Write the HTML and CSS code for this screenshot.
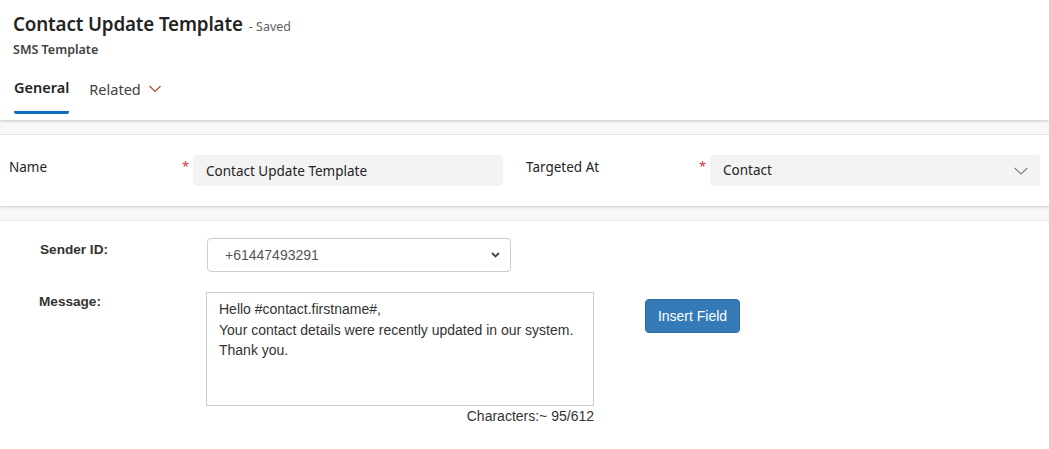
FILE: index.html
```html
<!DOCTYPE html>
<html>
<head>
<meta charset="utf-8">
<link rel="stylesheet" href="styles.css">
</head>
<body>
<header class="header">
  <div class="title-row">
    <h1 class="title">Contact Update Template</h1>
    <span class="saved">- Saved</span>
  </div>
  <div class="entity">SMS Template</div>
  <nav class="tabs">
    <div class="tab active">General</div>
    <div class="tab">Related
      <svg class="chev" width="12" height="8" viewBox="0 0 12 8"><path d="M0.5 1 L6 6.5 L11.5 1" fill="none" stroke="#b0502e" stroke-width="1.2"/></svg>
    </div>
  </nav>
</header>
<div class="gap"></div>
<section class="card">
  <div class="field">
    <label class="flabel">Name</label>
    <span class="req">*</span>
    <div class="finput">Contact Update Template</div>
  </div>
  <div class="field second">
    <label class="flabel">Targeted At</label>
    <span class="req">*</span>
    <div class="finput select">Contact
      <svg class="schev" width="14" height="8" viewBox="0 0 14 8"><path d="M0.5 0.8 L7 7 L13.5 0.8" fill="none" stroke="#777" stroke-width="1.1"/></svg>
    </div>
  </div>
</section>
<div class="gap"></div>
<section class="sms">
  <div class="row">
    <div class="slabel">Sender ID:</div>
    <div class="sselect">+61447493291
      <svg class="sarrow" width="9" height="6" viewBox="0 0 9 6"><path d="M1 1 L4.5 4.5 L8 1" fill="none" stroke="#444" stroke-width="1.8"/></svg>
    </div>
  </div>
  <div class="row msg">
    <div class="slabel">Message:</div>
    <div class="msgcol">
      <div class="textarea">Hello #contact.firstname#,<br>Your contact details were recently updated in our system.<br>Thank you.</div>
      <div class="count">Characters:~ 95/612</div>
    </div>
    <button class="btn">Insert Field</button>
  </div>
</section>
</body>
</html>
```
FILE: styles.css
```css
html, body { margin: 0; padding: 0; background: #fff; }
body { font-family: "Noto Sans", "Open Sans", sans-serif; color: #242424; }
.header { padding: 10px 0 0 13px; height: 120px; box-sizing: border-box; background: #fff; box-shadow: 0 1px 3px rgba(0,0,0,0.2); position: relative; z-index: 1; }
.title-row { display: flex; align-items: baseline; gap: 6px; }
.title { margin: 0; font-size: 18.8px; font-weight: 600; line-height: 28px; color: #242424; letter-spacing: -0.15px; }
.saved { font-size: 12.5px; color: #616161; }
.entity { font-size: 12.5px; font-weight: 600; color: #424242; margin-top: 2px; line-height: 20px; }
.tabs { display: flex; gap: 20px; margin-top: 17px; padding-left: 1px; }
.tab { font-size: 14.5px; line-height: 20px; padding-bottom: 14px; color: #424242; display: flex; align-items: center; gap: 8px; }
.tab.active { font-weight: 600; color: #242424; border-bottom: 3px solid #0f6cbd; border-radius: 2px; }
.tab .chev { margin-top: 1px; }
.gap { height: 14px; background: #f8f8f8; border-bottom: 1px solid #ebebeb; }
.card { height: 71px; background: #fff; box-shadow: 0 1px 3px rgba(0,0,0,0.18); display: flex; position: relative; z-index: 1; padding-top: 20px; box-sizing: border-box; }
.field { display: flex; align-items: flex-start; width: 517px; padding-left: 9px; box-sizing: border-box; }
.field.second { width: 532px; padding-left: 9px; }
.flabel { font-size: 13.5px; width: 175px; line-height: 20px; margin-top: 2px; color: #242424; }
.req { color: #c4314b; font-size: 13px; width: 9px; line-height: 14px; margin-top: 4px; margin-left: -2px; margin-right: 2px; }
.finput { background: #f3f3f3; border-radius: 4px; height: 31px; width: 310px; box-sizing: border-box; padding: 0 13px; font-size: 13.5px; line-height: 33px; color: #242424; }
.finput.select { width: 330px; display: flex; justify-content: space-between; align-items: center; line-height: 31px; }
.schev { margin-right: -1px; }
.sms { padding: 17px 0 0 39px; font-family: "Liberation Sans", Arial, sans-serif; color: #333; }
.row { display: flex; align-items: flex-start; }
.slabel { width: 167px; font-size: 13.6px; font-weight: bold; color: #333; line-height: 18px; padding-left: 1px; margin-top: 3px; }
.sselect { width: 304px; height: 34px; box-sizing: border-box; border: 1px solid #ccc; border-radius: 4px; display: flex; align-items: center; justify-content: space-between; padding: 0 10px 0 17px; font-size: 14px; color: #555; }
.msg { margin-top: 20px; }
.msg .slabel { padding-left: 0; margin-top: 1px; }
.msgcol { display: flex; flex-direction: column; align-items: flex-end; }
.textarea { width: 388px; height: 114px; box-sizing: border-box; border: 1px solid #ccc; padding: 6px 12px; font-size: 14px; line-height: 20.5px; color: #333; }
.count { font-size: 14px; color: #333; margin-top: 1px; line-height: 18px; }
.btn { margin-left: 51px; margin-top: 7px; background: #337ab7; color: #fff; border: 1px solid #2e6da4; border-radius: 4px; height: 34px; width: 95px; font-family: "Liberation Sans", Arial, sans-serif; font-size: 14px; padding: 0; }
```
